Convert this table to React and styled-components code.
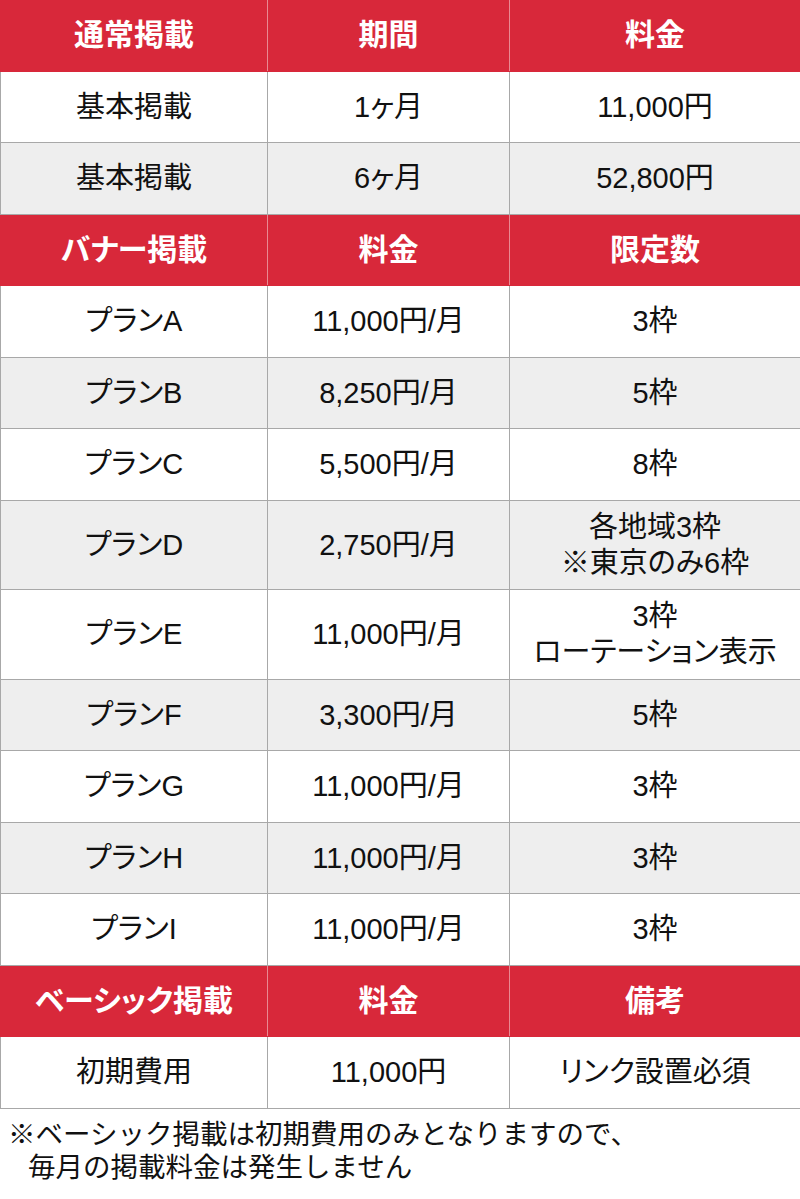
import React from "react";
import styled, { createGlobalStyle } from "styled-components";

const Global = createGlobalStyle`
  html, body { margin: 0; padding: 0; background: #ffffff; }
  body {
    font-family: "Liberation Sans", "Noto Sans CJK JP", sans-serif;
    color: #111111;
  }
`;

const Page = styled.div`
  width: 800px;
  display: flex;
  flex-direction: column;
`;

const Table = styled.div`
  display: flex;
  flex-direction: column;
`;

const Row = styled.div`
  display: grid;
  grid-template-columns: 267px 242px 1fr;
  height: ${(p) => (p.$tall ? "89.5px" : "71.5px")};
  box-sizing: border-box;
  background: ${(p) => (p.$head ? "#d8283a" : p.$shade ? "#eeeeee" : "#ffffff")};
  border-bottom: 1px solid ${(p) => (p.$head ? "#d8283a" : "#a8a8a8")};
  border-left: 1px solid ${(p) => (p.$head ? "#d8283a" : "#a8a8a8")};
`;

const Cell = styled.div`
  display: flex;
  flex-direction: column;
  align-items: center;
  justify-content: center;
  text-align: center;
  box-sizing: border-box;
  font-size: 29px;
  line-height: 36px;
  font-feature-settings: "palt";
  border-right: 1px solid #a8a8a8;
  &:last-child { border-right: none; }
`;

const HeadCell = styled(Cell)`
  color: #ffffff;
  font-weight: 700;
  font-size: 30px;
  border-right: 1px solid rgba(255, 255, 255, 0.45);
`;

const Note = styled.div`
  display: flex;
  flex-direction: column;
  padding: 9px 0 0 8px;
  font-size: 27.5px;
  line-height: 33px;
  color: #111111;
`;

const NoteLine = styled.div`
  padding-left: ${(p) => (p.$indent ? "20px" : "0")};
`;

const sections = [
  {
    head: ["通常掲載", "期間", "料金"],
    rows: [
      [["基本掲載"], ["1ヶ月"], ["11,000円"]],
      [["基本掲載"], ["6ヶ月"], ["52,800円"]],
    ],
  },
  {
    head: ["バナー掲載", "料金", "限定数"],
    rows: [
      [["プランA"], ["11,000円/月"], ["3枠"]],
      [["プランB"], ["8,250円/月"], ["5枠"]],
      [["プランC"], ["5,500円/月"], ["8枠"]],
      [["プランD"], ["2,750円/月"], ["各地域3枠", "※東京のみ6枠"]],
      [["プランE"], ["11,000円/月"], ["3枠", "ローテーション表示"]],
      [["プランF"], ["3,300円/月"], ["5枠"]],
      [["プランG"], ["11,000円/月"], ["3枠"]],
      [["プランH"], ["11,000円/月"], ["3枠"]],
      [["プランI"], ["11,000円/月"], ["3枠"]],
    ],
  },
  {
    head: ["ベーシック掲載", "料金", "備考"],
    rows: [[["初期費用"], ["11,000円"], ["リンク設置必須"]]],
  },
];

export default function App() {
  return (
    <Page>
      <Global />
      <Table>
        {sections.map((s, si) => (
          <React.Fragment key={si}>
            <Row $head>
              {s.head.map((h) => (
                <HeadCell key={h}>{h}</HeadCell>
              ))}
            </Row>
            {s.rows.map((r, ri) => {
              const tall = r.some((c) => c.length > 1);
              return (
                <Row key={ri} $shade={ri % 2 === 1} $tall={tall}>
                  {r.map((lines, ci) => (
                    <Cell key={ci}>
                      {lines.map((l) => (
                        <span key={l}>{l}</span>
                      ))}
                    </Cell>
                  ))}
                </Row>
              );
            })}
          </React.Fragment>
        ))}
      </Table>
      <Note>
        <NoteLine>※ベーシック掲載は初期費用のみとなりますので、</NoteLine>
        <NoteLine $indent>毎月の掲載料金は発生しません</NoteLine>
      </Note>
    </Page>
  );
}
